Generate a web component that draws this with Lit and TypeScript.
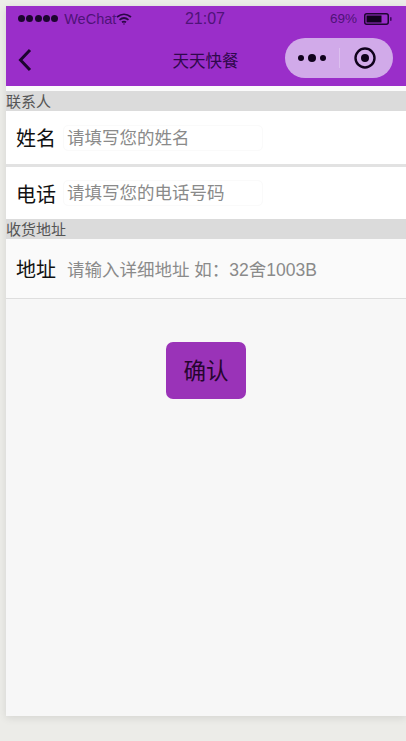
import { LitElement, html, css } from "lit";
import { customElement } from "lit/decorators.js";

@customElement("app-root")
export class AppRoot extends LitElement {
  static styles = css`
    :host {
      display: block;
      width: 406px;
      height: 741px;
      box-sizing: border-box;
      padding: 6px 0 25px 6px;
      background: #ecece8;
      overflow: hidden;
      font-family: "Liberation Sans", "Noto Sans CJK SC", sans-serif;
    }
    .phone {
      height: 710px;
      background: #f7f7f7;
      box-shadow: 0 2px 8px rgba(0, 0, 0, 0.1);
      display: flex;
      flex-direction: column;
    }
    .header {
      height: 80px;
      background: #9a2ec9;
      color: #3f0a63;
      flex: none;
      display: flex;
      flex-direction: column;
    }
    .status {
      height: 25px;
      display: grid;
      grid-template-columns: 1fr auto 1fr;
      align-items: center;
      padding: 0 14px 0 12px;
    }
    .status-left, .status-right {
      display: flex;
      align-items: center;
    }
    .status-right { justify-content: flex-end; }
    .dots { display: flex; gap: 1.3px; margin-right: 6px; }
    .dots i { width: 7px; height: 7px; border-radius: 50%; background: #1d0530; display: block; }
    .carrier { font-size: 14.5px; color: #4f1378; }
    .wifi { display: block; }
    .time { font-size: 16px; color: #4f1378; }
    .pct { font-size: 13.5px; color: #4f1378; margin-right: 7px; }
    .battery { display: block; }
    .nav {
      flex: 1;
      display: grid;
      grid-template-columns: 1fr auto 1fr;
      align-items: center;
      padding: 0 13px 0 12px;
    }
    .back { display: block; margin-top: 2px; }
    .title { font-size: 16.5px; color: #2f084c; padding-top: 2px; }
    .capsule {
      justify-self: end;
      width: 108px;
      height: 40px;
      box-sizing: border-box;
      border-radius: 20px;
      background: #d1aae9;
      display: flex;
      align-items: center;
      margin-top: -1px;
    }
    .cap-left { width: 54px; box-sizing: border-box; display: flex; justify-content: center; align-items: center; gap: 4px; }
    .cap-left i { display: block; background: #10021c; border-radius: 50%; width: 6px; height: 6px; }
    .cap-left i.mid { width: 8px; height: 8px; }
    .cap-sep { width: 1px; height: 20px; background: #dcc0ef; }
    .cap-right { flex: 1; display: flex; justify-content: center; padding-right: 3px; }
    .gap { height: 5px; background: #fbfbfb; flex: none; }
    .section {
      height: 20px;
      line-height: 21px;
      background: #dbdbdb;
      color: #555;
      font-size: 15px;
      flex: none;
    }
    .row {
      background: #fff;
      display: flex;
      align-items: center;
      padding-left: 10px;
      flex: none;
    }
    .row.name { height: 53px; }
    .row.phone-row { height: 52px; }
    .sep { height: 3px; background: #e2e2e2; flex: none; }
    .label { width: 40px; font-size: 20px; color: #111; margin-right: 11px; flex: none; }
    .field {
      width: 200px;
      height: 26px;
      line-height: 24px;
      box-sizing: border-box;
      margin-left: -4px;
      padding-left: 3px;
      border: 1px solid #fafafa;
      border-radius: 5px;
      color: #8a8a8a;
      font-size: 17.5px;
      white-space: nowrap;
    }
    .row.addr {
      height: 60px;
      box-sizing: border-box;
      background: #fafafa;
      border-bottom: 1px solid #dedede;
    }
    .hint { color: #8a8a8a; font-size: 17.5px; white-space: nowrap; }
    .actions {
      display: flex;
      justify-content: center;
      padding-top: 43px;
    }
    .confirm {
      width: 80px;
      height: 57px;
      border: 0;
      padding: 0 0 3px;
      border-radius: 7px;
      background: #9a33b8;
      color: #26052f;
      font: inherit;
      font-size: 22.5px;
    }
  `;

  render() {
    return html`
      <div class="phone">
        <div class="header">
          <div class="status">
            <div class="status-left">
              <span class="dots"><i></i><i></i><i></i><i></i><i></i></span>
              <span class="carrier">WeChat</span>
              <svg class="wifi" width="16" height="12" viewBox="0 0 16 12" fill="none" stroke="#2a0745" stroke-width="1.7">
                <path d="M1 4 Q8 -1.5 15 4" />
                <path d="M3.5 6.8 Q8 3.2 12.5 6.8" />
                <path d="M6 9.3 Q8 7.8 10 9.3" />
                <circle cx="8" cy="11" r="0.7" fill="#2a0745" stroke="none" />
              </svg>
            </div>
            <span class="time">21:07</span>
            <div class="status-right">
              <span class="pct">69%</span>
              <svg class="battery" width="28" height="12" viewBox="0 0 28 12">
                <rect x="0.75" y="0.75" width="23.5" height="10.5" rx="2" fill="none" stroke="#1d0530" stroke-width="1.5" />
                <rect x="2.5" y="2.5" width="15" height="7" fill="#12021f" />
                <rect x="26" y="4" width="1.6" height="4" rx="0.8" fill="#3f0a63" />
              </svg>
            </div>
          </div>
          <div class="nav">
            <svg class="back" width="14" height="24" viewBox="0 0 14 24" fill="none" stroke="#1d0530" stroke-width="3">
              <path d="M12 2 L2.5 12 L12 22" />
            </svg>
            <span class="title">天天快餐</span>
            <div class="capsule">
              <div class="cap-left"><i></i><i class="mid"></i><i></i></div>
              <div class="cap-sep"></div>
              <div class="cap-right">
                <svg width="24" height="24" viewBox="0 0 24 24">
                  <circle cx="12" cy="12" r="9.5" fill="none" stroke="#10021c" stroke-width="2.4" />
                  <circle cx="12" cy="12" r="4" fill="#10021c" />
                </svg>
              </div>
            </div>
          </div>
        </div>
        <div class="gap"></div>
        <div class="section">联系人</div>
        <div class="row name">
          <span class="label">姓名</span>
          <div class="field">请填写您的姓名</div>
        </div>
        <div class="sep"></div>
        <div class="row phone-row">
          <span class="label">电话</span>
          <div class="field">请填写您的电话号码</div>
        </div>
        <div class="section">收货地址</div>
        <div class="row addr">
          <span class="label">地址</span>
          <span class="hint">请输入详细地址 如：32舍1003B</span>
        </div>
        <div class="actions"><button class="confirm">确认</button></div>
      </div>
    `;
  }
}
